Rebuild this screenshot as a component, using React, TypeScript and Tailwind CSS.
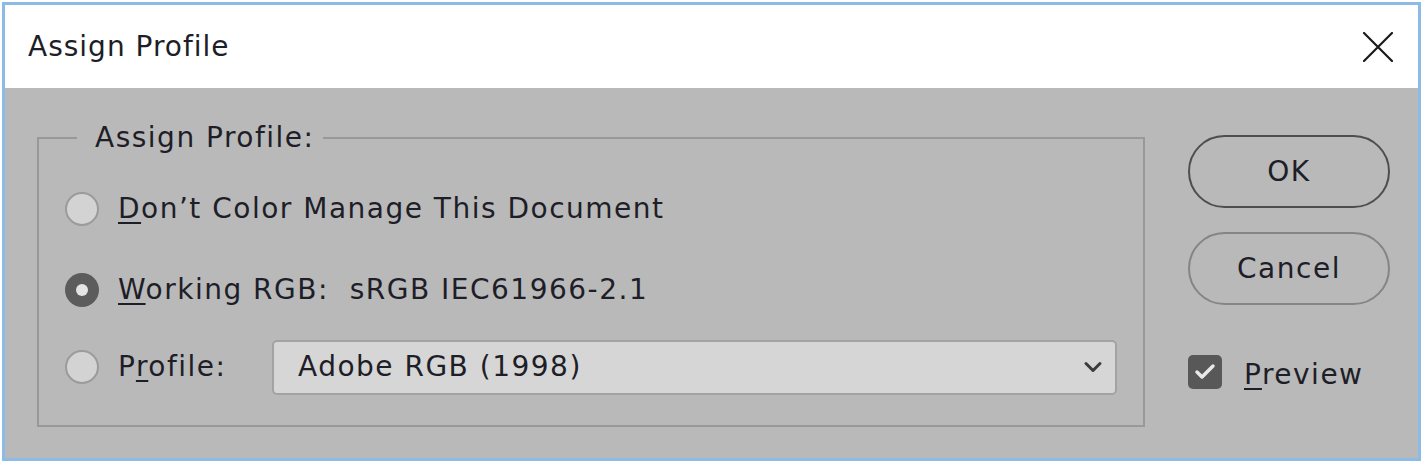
import { Check, ChevronDown } from "lucide-react";

const font = "font-['DejaVu_Sans',_'Noto_Sans',_sans-serif]";
const txt = "text-[28px] tracking-[1.5px]";

function Radio({ checked }: { checked?: boolean }) {
  if (checked) {
    return (
      <span className="flex h-[34px] w-[34px] shrink-0 items-center justify-center rounded-full bg-[#5c5c5c]">
        <span className="h-[12px] w-[12px] rounded-full bg-[#e4e4e4]" />
      </span>
    );
  }
  return (
    <span className="h-[34px] w-[34px] shrink-0 rounded-full border-2 border-[#9b9b9b] bg-[#d3d3d3]" />
  );
}

export default function App() {
  return (
    <div className={`h-[465px] w-[1425px] bg-white pt-[2px] pl-[2px] pr-[4px] pb-[4px] text-[#1e1e28] ${font}`}>
      <div className="flex h-full flex-col border-[3px] border-[#8dbbe8]">
        <div className="flex h-[83px] shrink-0 items-center justify-between bg-white pl-[23px] pr-[25px]">
          <span className="text-[28px] leading-none tracking-[1px]">Assign Profile</span>
          <svg width="30" height="30" viewBox="0 0 30 30" className="mt-[1px]">
            <path d="M1 1 L29 29 M29 1 L1 29" stroke="#1a1a1a" strokeWidth="2.2" strokeLinecap="round" />
          </svg>
        </div>

        <div className="flex flex-1 bg-[#b9b9b9] pl-[32px]">
          <fieldset className="mt-[30px] h-[309px] w-[1108px] border-2 border-[#999999] pl-[26px] pr-[26px]">
            <legend className={`ml-[12px] pl-[18px] pr-[8px] leading-[40px] ${txt}`}>Assign Profile:</legend>

            <div className="mt-[23px] flex h-[56px] items-center">
              <Radio />
              <span className={`ml-[19px] ${txt}`}>
                <u className="underline-offset-4">D</u>on’t Color Manage This Document
              </span>
            </div>

            <div className="mt-[25px] flex h-[56px] items-center">
              <Radio checked />
              <span className={`ml-[19px] whitespace-pre ${txt}`}>
                <u className="underline-offset-4">W</u>orking RGB:  sRGB IEC61966-2.1
              </span>
            </div>

            <div className="mt-[21px] flex h-[56px] items-center">
              <Radio />
              <span className={`ml-[19px] w-[154px] ${txt}`}>
                P<u className="underline-offset-4">r</u>ofile:
              </span>
              <div className="flex h-[55px] flex-1 items-center justify-between rounded-[5px] border-2 border-[#a3a3a3] bg-[#d6d6d6] pl-[24px] pr-[8px]">
                <span className={txt}>Adobe RGB (1998)</span>
                <ChevronDown size={28} strokeWidth={2.6} className="text-[#3c3c3c]" />
              </div>
            </div>
          </fieldset>

          <div className="ml-[43px] mt-[47px] flex w-[202px] flex-col">
            <button className={`flex h-[73px] items-center justify-center rounded-full border-2 border-[#4e4e4e] ${txt}`}>
              OK
            </button>
            <button className={`mt-[24px] flex h-[73px] items-center justify-center rounded-full border-2 border-[#858585] ${txt}`}>
              Cancel
            </button>
            <div className="mt-[50px] flex h-[34px] items-center">
              <span className="flex h-[34px] w-[34px] items-center justify-center rounded-[5px] bg-[#585858]">
                <Check size={24} strokeWidth={3.5} className="text-[#e8e8e8]" />
              </span>
              <span className={`ml-[22px] pt-[6px] ${txt}`}>
                <u className="underline-offset-4">P</u>review
              </span>
            </div>
          </div>
        </div>
      </div>
    </div>
  );
}
